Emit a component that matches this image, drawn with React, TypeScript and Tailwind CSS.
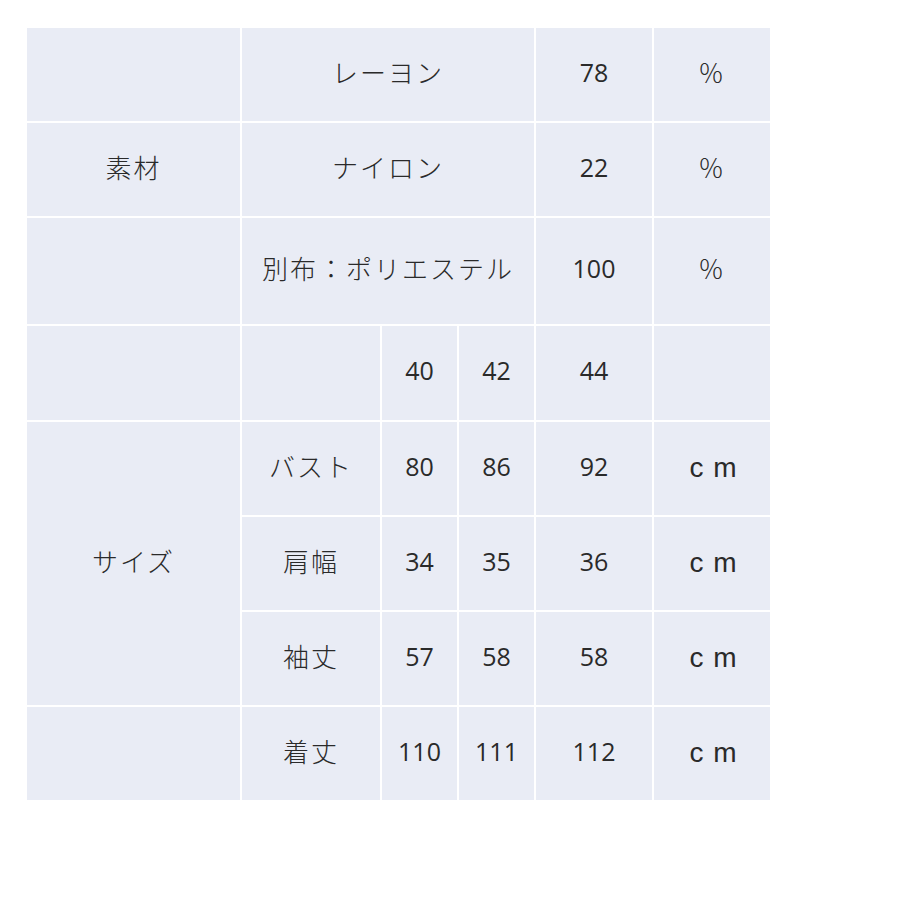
const jp = "font-['Noto_Sans_CJK_JP',sans-serif] text-[26px] tracking-[2px] font-light pb-[7px]";
const num = "font-['Open_Sans',sans-serif] text-[25px] text-[#1c1c1c] pb-[4px]";
const unit = "font-['Liberation_Sans',sans-serif] text-[28px] tracking-[1px] text-[#1c1c1c] pl-[3px] pb-[2px]";
const cell = "bg-[#e9ecf5] text-center align-middle text-[#2a2a2a] px-0 pt-0";

const sizeRows = [
  { label: "バスト", values: ["80", "86", "92"] },
  { label: "肩幅", values: ["34", "35", "36"] },
  { label: "袖丈", values: ["57", "58", "58"] },
];

export default function App() {
  return (
    <div className="min-h-[900px] w-[900px] bg-white pl-[25px] pt-[26px]">
      <table className="table-fixed border-separate border-spacing-[2px] bg-white">
        <colgroup>
          <col className="w-[213px]" />
          <col className="w-[138px]" />
          <col className="w-[75px]" />
          <col className="w-[75px]" />
          <col className="w-[116px]" />
          <col className="w-[116px]" />
        </colgroup>
        <tbody>
          <tr className="h-[93px]">
            <td className={cell}></td>
            <td colSpan={3} className={`${cell} ${jp}`}>レーヨン</td>
            <td className={`${cell} ${num}`}>78</td>
            <td className={`${cell} ${jp}`}>％</td>
          </tr>
          <tr className="h-[93px]">
            <td className={`${cell} ${jp}`}>素材</td>
            <td colSpan={3} className={`${cell} ${jp}`}>ナイロン</td>
            <td className={`${cell} ${num}`}>22</td>
            <td className={`${cell} ${jp}`}>％</td>
          </tr>
          <tr className="h-[106px]">
            <td className={cell}></td>
            <td colSpan={3} className={`${cell} ${jp}`}>別布：ポリエステル</td>
            <td className={`${cell} ${num}`}>100</td>
            <td className={`${cell} ${jp}`}>％</td>
          </tr>
          <tr className="h-[94px]">
            <td className={cell}></td>
            <td className={cell}></td>
            <td className={`${cell} ${num}`}>40</td>
            <td className={`${cell} ${num}`}>42</td>
            <td className={`${cell} ${num}`}>44</td>
            <td className={cell}></td>
          </tr>
          {sizeRows.map((row, i) => (
            <tr key={row.label} className="h-[93px]">
              {i === 0 && (
                <td rowSpan={3} className={`${cell} ${jp}`}>サイズ</td>
              )}
              <td className={`${cell} ${jp}`}>{row.label}</td>
              {row.values.map((v, j) => (
                <td key={j} className={`${cell} ${num}`}>{v}</td>
              ))}
              <td className={`${cell} ${unit}`}>c m</td>
            </tr>
          ))}
          <tr className="h-[93px]">
            <td className={cell}></td>
            <td className={`${cell} ${jp}`}>着丈</td>
            <td className={`${cell} ${num}`}>110</td>
            <td className={`${cell} ${num}`}>111</td>
            <td className={`${cell} ${num}`}>112</td>
            <td className={`${cell} ${unit}`}>c m</td>
          </tr>
        </tbody>
      </table>
    </div>
  );
}
